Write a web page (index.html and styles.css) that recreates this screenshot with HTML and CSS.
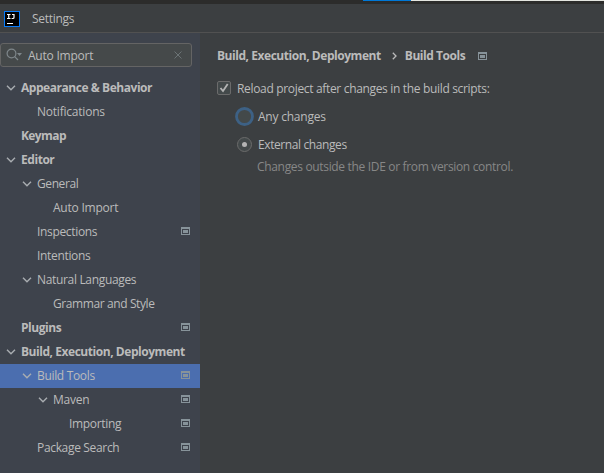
FILE: index.html
```html
<!DOCTYPE html>
<html lang="en">
<head>
<meta charset="utf-8">
<title>Settings</title>
<link rel="stylesheet" href="styles.css">
</head>
<body>
<svg class="defs" width="0" height="0">
  <symbol id="chev" viewBox="0 0 10 8"><path d="M1 1.8 L5 5.8 L9 1.8" fill="none" stroke="#a9adb1" stroke-width="1.4"/></symbol>
  <symbol id="proj" viewBox="0 0 9 8"><path fill-rule="evenodd" d="M0 0H9V8H0ZM1 2V7H8V2Z"/><path d="M2 3H7V6H2Z"/></symbol>
</svg>
<div class="strip"><span class="progress"></span><span class="rest"></span></div>
<header class="titlebar">
  <svg class="logo" width="16" height="16" viewBox="0 0 16 16"><rect width="16" height="16" fill="#087cfa"/><rect x="1" y="1" width="14" height="14" fill="#000"/><path d="M3 3.5H6.5M4.75 3V8M3 7.5H6.5M8 3.5H10.5M10 3V6.5Q10 7.5 8.9 7.5H7.6M3 12.5H9" fill="none" stroke="#fff" stroke-width="1.2"/></svg>
  <span class="title">Settings</span>
</header>
<div class="body">
  <aside class="sidebar">
    <div class="search">
      <svg width="17" height="14" viewBox="0 0 17 14"><g fill="none" stroke="#7f878b" stroke-width="1.2"><circle cx="5.5" cy="5.5" r="4.4"/><path d="M8.7 8.7L12 12"/></g><path d="M11 5H16L13.5 8Z" fill="#7f878b"/></svg>
      <span class="query loose">Auto Import</span>
      <svg width="8" height="8" viewBox="0 0 8 8"><path d="M.5 .5L7.5 7.5M7.5 .5L.5 7.5" stroke="#6b7375" fill="none"/></svg>
    </div>
    <nav class="tree">
      <div class="row l0 b"><svg class="c"><use href="#chev"/></svg><span>Appearance &amp; Behavior</span></div>
      <div class="row l1"><i class="c"></i><span class="loose">Notifications</span></div>
      <div class="row l0 b"><i class="c"></i><span class="wide">Keymap</span></div>
      <div class="row l0 b"><svg class="c"><use href="#chev"/></svg><span>Editor</span></div>
      <div class="row l1"><svg class="c"><use href="#chev"/></svg><span class="tight">General</span></div>
      <div class="row l2"><i class="c"></i><span class="loose">Auto Import</span></div>
      <div class="row l1"><i class="c"></i><span>Inspections</span><svg class="p"><use href="#proj"/></svg></div>
      <div class="row l1"><i class="c"></i><span>Intentions</span></div>
      <div class="row l1"><svg class="c"><use href="#chev"/></svg><span>Natural Languages</span></div>
      <div class="row l2"><i class="c"></i><span class="tight">Grammar and Style</span></div>
      <div class="row l0 b"><i class="c"></i><span>Plugins</span><svg class="p"><use href="#proj"/></svg></div>
      <div class="row l0 b"><svg class="c"><use href="#chev"/></svg><span>Build, Execution, Deployment</span></div>
      <div class="row l1 selected"><svg class="c"><use href="#chev"/></svg><span>Build Tools</span><svg class="p"><use href="#proj"/></svg></div>
      <div class="row l2"><svg class="c"><use href="#chev"/></svg><span class="loose">Maven</span><svg class="p"><use href="#proj"/></svg></div>
      <div class="row l3"><i class="c"></i><span>Importing</span><svg class="p"><use href="#proj"/></svg></div>
      <div class="row l1"><i class="c"></i><span>Package Search</span><svg class="p"><use href="#proj"/></svg></div>
    </nav>
  </aside>
  <main class="content">
    <div class="crumbs b"><span>Build, Execution, Deployment</span><svg class="sep" width="5" height="8" viewBox="0 0 5 8"><path d="M.8 .8L4 4L.8 7.2" fill="none" stroke="#bbb" stroke-width="1.3"/></svg><span>Build Tools</span><svg class="p"><use href="#proj"/></svg></div>
    <div class="option check"><svg width="14" height="14" viewBox="0 0 14 14"><rect x=".5" y=".5" width="13" height="13" rx="1.5" fill="#43494a" stroke="#6b6b6b"/><path d="M3.5 7L6 10L10.7 3" fill="none" stroke="#b4b4b4" stroke-width="1.8"/></svg><span>Reload project after changes in the build scripts:</span></div>
    <div class="option radio"><svg width="20" height="20" viewBox="0 0 20 20"><circle cx="10.5" cy="9.5" r="8" fill="#43494a" stroke="#3d6185" stroke-width="2.8"/></svg><span class="loose">Any changes</span></div>
    <div class="option radio"><svg width="20" height="20" viewBox="0 0 20 20"><circle cx="10.5" cy="9.5" r="7" fill="#43494a" stroke="#6b6b6b"/><circle cx="10.5" cy="9.5" r="2.5" fill="#b4b4b4"/></svg><span class="tight">External changes</span></div>
    <div class="hint">Changes outside the IDE or from version control.</div>
  </main>
</div>
</body>
</html>
```
FILE: styles.css
```css
* { box-sizing: border-box; }
body { margin: 0; width: 604px; height: 473px; overflow: hidden; background: #3c3f41; color: #bbb; font: 12px/16px "Open Sans", "Noto Sans", sans-serif; letter-spacing: -.33px; display: flex; flex-direction: column; white-space: nowrap; }
svg { flex: none; display: block; }
.defs { position: absolute; }
.b { font-weight: 700; letter-spacing: -.45px; }
.loose { letter-spacing: -.22px; }
.wide { letter-spacing: -.6px; }
.tight { letter-spacing: -.4px; }
.strip { height: 4px; flex: none; background: #2c2c2b; display: flex; padding-left: 363px; }
.progress { width: 48px; height: 1px; background: #0078d7; }
.rest { flex: 1; height: 1px; background: #e3e5df; }
.titlebar { height: 29px; flex: none; display: flex; align-items: center; padding: 1px 4px 0; border-bottom: 1px solid #515151; }
.title { margin-left: 12px; letter-spacing: -.3px; padding-top: 1px; }
.body { flex: 1; display: flex; min-height: 0; }
.sidebar { width: 200px; flex: none; background: #3e434c; padding-top: 10px; }
.search { width: 192px; height: 24px; display: flex; align-items: center; border: 1px solid #646464; border-radius: 3px; background: #45494a; padding: 0 9px 0 5px; }
.query { margin-left: 5px; flex: 1; padding-top: 1px; }
.tree { padding-top: 9px; }
.row { height: 24px; display: flex; align-items: center; padding-right: 10px; }
.l0 { padding-left: 6px; }
.l1 { padding-left: 22px; }
.l2 { padding-left: 38px; }
.l3 { padding-left: 54px; }
.c { width: 10px; height: 8px; margin-right: 5px; flex: none; }
.p { width: 9px; height: 8px; fill: #87939a; margin: 0 0 2px auto; }
.selected { background: #4b6eaf; }
.content { flex: 1; padding: 15px 0 0 17px; }
.crumbs { display: flex; align-items: center; height: 16px; }
.sep { margin: 0 8px 0 11px; }
.crumbs .p { margin: 0 0 0 13px; }
.option { display: flex; align-items: center; }
.check { height: 16px; margin-top: 17px; gap: 6px; }
.check svg { margin-bottom: 2px; }
.radio { height: 20px; padding-left: 17px; gap: 4px; margin-top: 10px; }
.radio + .radio { margin-top: 8px; }
.hint { margin: 4px 0 0 40px; color: #878787; }
```
